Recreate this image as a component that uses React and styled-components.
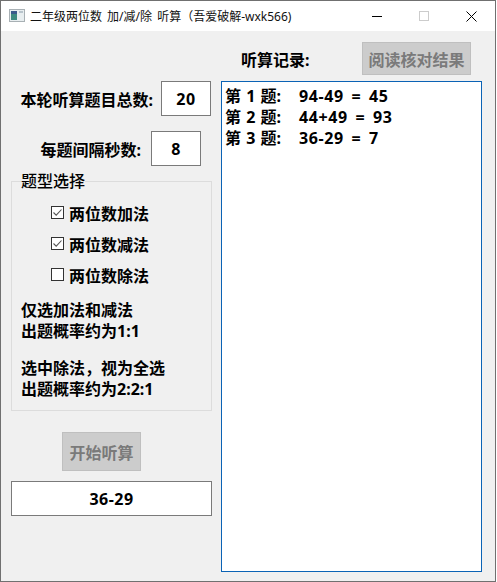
import React from 'react';
import styled, { createGlobalStyle } from 'styled-components';

const Global = createGlobalStyle`
  html, body { margin: 0; padding: 0; background: #fff; }
  * { box-sizing: border-box; }
`;

const FONT = `"Noto Sans", "Noto Sans CJK SC", sans-serif`;

const Window = styled.div`
  width: 496px;
  height: 582px;
  border: 1px solid #707070;
  background: #f0f0f0;
  display: flex;
  flex-direction: column;
  font-family: ${FONT};
  overflow: hidden;
`;

const TitleBar = styled.div`
  height: 30px;
  flex: none;
  background: #fff;
  display: flex;
  align-items: center;
  padding-left: 8px;
`;

const TitleIcon = styled.svg`
  width: 16px;
  height: 16px;
  flex: none;
  margin-right: 5px;
`;

const TitleText = styled.div`
  flex: 1;
  font-size: 12px;
  word-spacing: 2px;
  color: #111;
  white-space: pre;
`;

const WinBtn = styled.div`
  width: 47px;
  height: 30px;
  display: flex;
  align-items: center;
  justify-content: center;
`;

const Body = styled.div`
  flex: 1;
  display: grid;
  grid-template-columns: 201px 261px;
  column-gap: 9px;
  padding: 0 0 0 10px;
`;

const LeftCol = styled.div`
  display: flex;
  flex-direction: column;
`;

const FieldRow = styled.div`
  display: flex;
  align-items: center;
  justify-content: flex-end;
  margin-top: ${p => p.$top}px;
  padding-right: ${p => p.$right}px;
  gap: ${p => p.$gap}px;
`;

const FieldLabel = styled.div`
  font-size: 16px;
  font-weight: 700;
  color: #000;
`;

const ValueBox = styled.div`
  width: 50px;
  height: 35px;
  background: #fff;
  border: 1px solid #7a7a7a;
  display: flex;
  align-items: center;
  justify-content: center;
  font-size: 16px;
  font-weight: 700;
  letter-spacing: 0.5px;
  color: #000;
`;

const Group = styled.fieldset`
  margin: 6px 0 0;
  padding: 0 0 0 9px;
  height: 239px;
  border: 1px solid #dcdcdc;
  min-width: 0;
`;

const Legend = styled.legend`
  font-size: 16px;
  font-weight: 500;
  padding: 0;
  margin-left: 0;
  color: #000;
  line-height: 18px;
`;

const CheckList = styled.div`
  display: flex;
  flex-direction: column;
  gap: 10px;
  margin-top: 12px;
  padding-left: 30px;
`;

const CheckRow = styled.div`
  display: flex;
  align-items: center;
  height: 21px;
  gap: 5px;
  font-size: 16px;
  font-weight: 700;
  color: #000;
`;

const CheckBox = styled.svg`
  width: 13px;
  height: 13px;
  flex: none;
`;

const Note = styled.div`
  margin-top: ${p => p.$top}px;
  font-size: 16px;
  font-weight: 700;
  line-height: 21px;
  color: #000;
`;

const DisabledButton = styled.div`
  background: #cccccc;
  border: 1px solid #bfbfbf;
  color: #7a7a7a;
  font-size: 16px;
  font-weight: 700;
  display: flex;
  align-items: center;
  justify-content: center;
  width: ${p => p.$w}px;
  height: ${p => p.$h}px;
  margin-right: ${p => p.$right || 0}px;
`;

const StartWrap = styled.div`
  display: flex;
  padding-left: 51px;
  margin-top: 21px;
`;

const Question = styled(ValueBox)`
  width: 201px;
  margin-top: 10px;
`;

const RightCol = styled.div`
  display: flex;
  flex-direction: column;
`;

const RecordHead = styled.div`
  display: flex;
  align-items: center;
  height: 33px;
  margin-top: 11px;
  padding-left: 20px;
`;

const RecordLabel = styled.div`
  font-size: 16px;
  font-weight: 700;
  color: #000;
  flex: 1;
`;

const LogBox = styled.div`
  margin-top: 6px;
  height: 491px;
  background: #fff;
  border: 1px solid #0b63b5;
  padding: 4px 3px;
`;

const LogLine = styled.div`
  font-size: 16px;
  font-weight: 700;
  line-height: 21px;
  color: #000;
  white-space: pre;
  word-spacing: 1px;
  display: flex;
`;

const LogLabel = styled.span`
  width: 74px;
  flex: none;
`;

const LogExpr = styled.span`
  letter-spacing: 0.6px;
  word-spacing: 3px;
`;

const Check = ({ checked }) => (
  <CheckBox viewBox="0 0 13 13">
    <rect x="0.5" y="0.5" width="12" height="12" fill="#fff" stroke="#333" />
    {checked && <path d="M2.5 6.5 L5.2 9.2 L10.5 3.5" fill="none" stroke="#555" strokeWidth="1.1" />}
  </CheckBox>
);

const records = [
  ['第 1 题:', '94-49 = 45'],
  ['第 2 题:', '44+49 = 93'],
  ['第 3 题:', '36-29 = 7'],
];

export default function App() {
  return (
    <>
      <Global />
      <Window>
        <TitleBar>
          <TitleIcon viewBox="0 0 16 16">
            <rect x="0.5" y="1.5" width="15" height="12" fill="#e8eef0" stroke="#a8b0b4" />
            <rect x="2" y="3" width="6" height="9" fill="#3e8a80" />
            <rect x="2" y="3" width="6" height="3" fill="#3a5a8c" />
            <rect x="10" y="3" width="4" height="2" fill="#b8c4cc" />
          </TitleIcon>
          <TitleText>二年级两位数 加/减/除 听算（吾爱破解-wxk566)</TitleText>
          <WinBtn>
            <svg width="11" height="11" viewBox="0 0 11 11"><path d="M0 5.5H10" stroke="#000" /></svg>
          </WinBtn>
          <WinBtn>
            <svg width="11" height="11" viewBox="0 0 11 11"><rect x="0.5" y="0.5" width="9" height="9" fill="none" stroke="#ccc" /></svg>
          </WinBtn>
          <WinBtn>
            <svg width="11" height="11" viewBox="0 0 11 11"><path d="M0.5 0.5L10.5 10.5M10.5 0.5L0.5 10.5" stroke="#000" fill="none" /></svg>
          </WinBtn>
        </TitleBar>
        <Body>
          <LeftCol>
            <FieldRow $top={50} $right={1} $gap={8}>
              <FieldLabel>本轮听算题目总数:</FieldLabel>
              <ValueBox>20</ValueBox>
            </FieldRow>
            <FieldRow $top={15} $right={11} $gap={10}>
              <FieldLabel>每题间隔秒数:</FieldLabel>
              <ValueBox>8</ValueBox>
            </FieldRow>
            <Group>
              <Legend>题型选择</Legend>
              <CheckList>
                <CheckRow><Check checked />两位数加法</CheckRow>
                <CheckRow><Check checked />两位数减法</CheckRow>
                <CheckRow><Check />两位数除法</CheckRow>
              </CheckList>
              <Note $top={15}>仅选加法和减法<br />出题概率约为1:1</Note>
              <Note $top={16}>选中除法，视为全选<br />出题概率约为2:2:1</Note>
            </Group>
            <StartWrap>
              <DisabledButton $w={79} $h={39}>开始听算</DisabledButton>
            </StartWrap>
            <Question>36-29</Question>
          </LeftCol>
          <RightCol>
            <RecordHead>
              <RecordLabel>听算记录:</RecordLabel>
              <DisabledButton $w={109} $h={33} $right={11}>阅读核对结果</DisabledButton>
            </RecordHead>
            <LogBox>
              {records.map(([label, expr]) => (
                <LogLine key={label}>
                  <LogLabel>{label}</LogLabel>
                  <LogExpr>{expr}</LogExpr>
                </LogLine>
              ))}
            </LogBox>
          </RightCol>
        </Body>
      </Window>
    </>
  );
}
